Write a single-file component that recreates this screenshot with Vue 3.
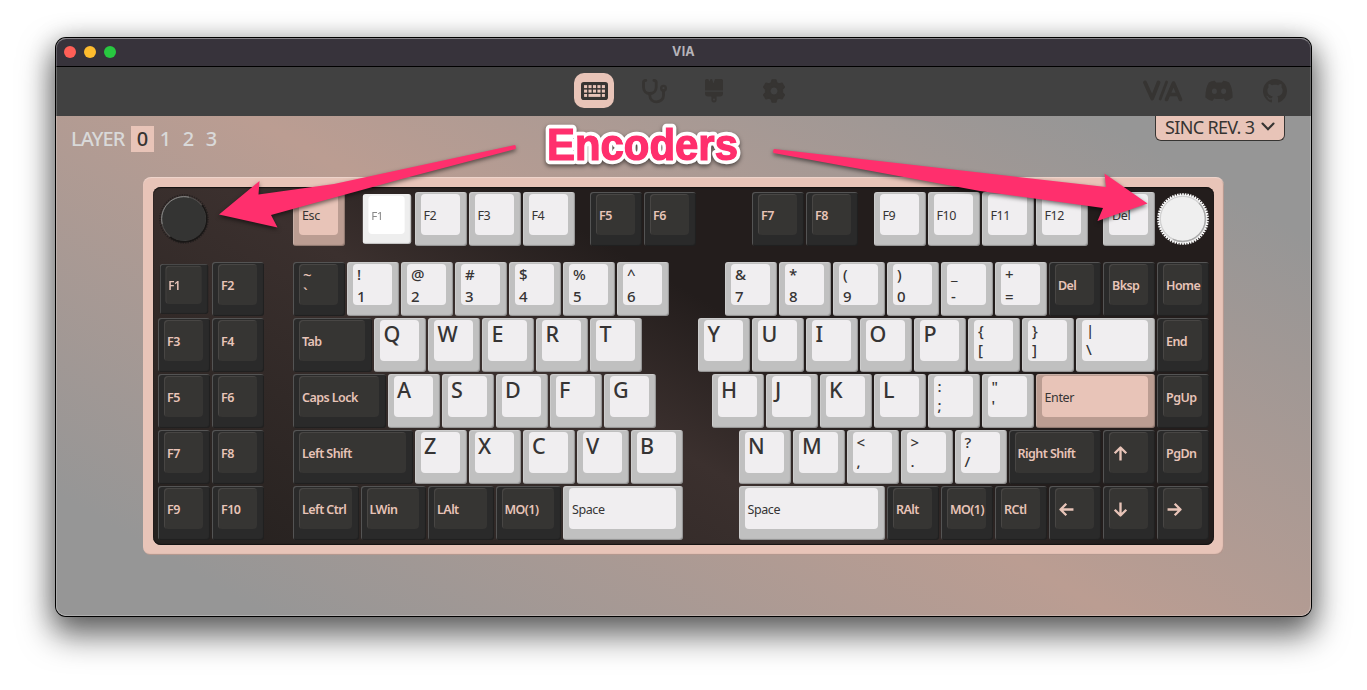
<script setup>
// Key fields: t legend, b lower legend, w width and g gap before in units, tone
const l = 'light', d = 'dark', a = 'accent'
const row = (s, first, tone = l) => [...s].map((c, i) => ({ t: c, g: i ? 0 : first, tone, big: true }))
const pairs = (s, first, tight = true) => s.map((p, i) => ({ t: p[0], b: p[1], g: i ? 0 : first, tone: l, tight }))
const k = (t, w = 1, g = 0, tone = d, o = {}) => ({ t, w, g, tone, ...o })

const rows = [
  [
    { knob: 'kd' }, k('Esc', 1, 1.5, a), k('F1', 1, 0.25, l, { pressed: true, white: true }), k('F2', 1, 0, l), k('F3', 1, 0, l), k('F4', 1, 0, l),
    k('F5', 1, 0.25), k('F6'), k('F7', 1, 1), k('F8'),
    k('F9', 1, 0.25, l), k('F10', 1, 0, l), k('F11', 1, 0, l), k('F12', 1, 0, l), k('Del', 1, 0.25, l), { knob: 'kl' },
  ],
  [
    k('F1', 1, 0, d, { pressed: true }), k('F2'), k('~', 1, 0.5, d, { b: '`', tight: true }),
    ...pairs(['!1', '@2', '#3', '$4', '%5', '^6'], 0, false),
    ...pairs(['&7', '*8', '(9', ')0', '_-', '+='], 1, false),
    k('Del'), k('Bksp'), k('Home'),
  ],
  [
    k('F3'), k('F4'), k('Tab', 1.5, 0.5), ...row('QWERT', 0), ...row('YUIOP', 1),
    ...pairs(['{[', '}]'], 0), k('|', 1.5, 0, l, { b: '\\', tight: true }), k('End'),
  ],
  [
    k('F5'), k('F6'), k('Caps Lock', 1.75, 0.5), ...row('ASDFG', 0), ...row('HJKL', 1),
    ...pairs([':;', '"\''], 0), k('Enter', 2.25, 0, a), k('PgUp'),
  ],
  [
    k('F7'), k('F8'), k('Left Shift', 2.25, 0.5), ...row('ZXCVB', 0), ...row('NM', 1),
    ...pairs(['<,', '>.', '?/'], 0), k('Right Shift', 1.75), k('', 1, 0, d, { arrow: -90 }), k('PgDn'),
  ],
  [
    k('F9'), k('F10'), k('Left Ctrl', 1.25, 0.5), k('LWin', 1.25), k('LAlt', 1.25), k('MO(1)', 1.25), k('Space', 2.25, 0, l),
    k('Space', 2.75, 1, l), k('RAlt'), k('MO(1)'), k('RCtl'), k('', 1, 0, d, { arrow: 180 }), k('', 1, 0, d, { arrow: 90 }), k('', 1, 0, d, { arrow: 0 }),
  ],
]
const size = (q) => ({ width: (q.w || 1) * 54 - 2 + 'px', marginLeft: (q.g || 0) * 54 + 'px' })
const teeth = Array.from({ length: 60 }, (_, i) => i * 6)
</script>

<template>
  <div class="desk">
    <div class="window">
      <header class="titlebar">
        <i class="dot red"></i><i class="dot amber"></i><i class="dot green"></i>
        <span class="title">VIA</span>
      </header>
      <nav class="toolbar">
        <div class="tabs">
          <span class="tab active">
            <svg width="27" height="18" viewBox="0 0 27 18">
              <rect x="0" y="0" width="27" height="18" rx="2.8" fill="#363432" />
              <g fill="#e8c4b8">
                <rect v-for="n in 5" :key="'p' + n" :x="n * 4.45 - 1.4" y="3.1" width="3.1" height="3" />
                <rect v-for="n in 5" :key="'q' + n" :x="n * 4.45 - 1.4" y="7.6" width="3.1" height="3" />
                <rect x="3.1" y="12" width="3" height="2.9" /><rect x="7.5" y="12" width="12" height="2.9" /><rect x="20.9" y="12" width="3" height="2.9" />
              </g>
            </svg>
          </span>
          <span class="tab">
            <svg width="26" height="26" viewBox="0 0 26 26" fill="none" stroke="#363432" stroke-width="2.8" stroke-linecap="round" stroke-linejoin="round">
              <path d="M4.8 2.4 C3 2.4 2.5 3 2.5 4.5 V9.2 C2.5 12.8 5 15.5 8.8 15.5 S15.2 12.8 15.2 9.2 V4.5 C15.2 3 14.7 2.4 12.9 2.4" />
              <path d="M8.8 15.5 V17.5 C9 21.5 12 23.8 15.5 23.8 S22.5 21.5 22.5 17.8 V13" />
              <circle cx="22.5" cy="10.2" r="2.3" stroke-width="2.4" />
            </svg>
          </span>
          <span class="tab">
            <svg width="20" height="24" viewBox="0 0 20 24" fill="#363432">
              <path d="M1 1.5 Q1 0 2.5 0 H4.2 L5.4 2.6 L6.6 0 H8 L9.5 4.4 L11 0 H17.5 Q19 0 19 1.5 V11.5 H1 Z" />
              <path fill-rule="evenodd" d="M1 12.8 H19 V14.2 Q19 17.5 15.8 17.5 H12.6 V20.8 A2.6 2.6 0 0 1 7.4 20.8 V17.5 H4.2 Q1 17.5 1 14.2 Z M10 19.4 A1 1 0 1 0 10 21.4 A1 1 0 1 0 10 19.4 Z" />
            </svg>
          </span>
          <span class="tab">
            <svg width="24" height="24" viewBox="0 0 24 24" fill="#363432">
              <path fill-rule="evenodd" d="M10 .8 H14 L14.8 3.7 L17 4.9 L20 4.2 L22.5 8 L20.5 10.4 V13.6 L22.5 16 L20 19.8 L17 19.1 L14.8 20.3 L14 23.2 H10 L9.2 20.3 L7 19.1 L4 19.8 L1.5 16 L3.5 13.6 V10.4 L1.5 8 L4 4.2 L7 4.9 L9.2 3.7 Z M12 7.9 A4.1 4.1 0 1 0 12 16.1 A4.1 4.1 0 1 0 12 7.9 Z" stroke="#363432" stroke-width="1.2" stroke-linejoin="round" />
            </svg>
          </span>
        </div>
        <div class="links">
          <svg width="40" height="22" viewBox="0 0 40 22" fill="none" stroke="#363432">
            <path d="M2 2.5 L9.2 18.5 L15.5 2.5" stroke-width="3.8" stroke-linejoin="round" stroke-linecap="round" />
            <path d="M17.2 19 L23.6 2" stroke-width="2.8" stroke-linecap="round" />
            <path d="M23.5 19.5 L30.5 3 L37.5 19.5 M27.5 14.5 H34.5" stroke-width="3.6" stroke-linejoin="round" stroke-linecap="round" />
          </svg>
          <svg class="discord" width="28" height="22" viewBox="0 0 28 22" fill="#363432">
            <path fill-rule="evenodd" d="M9.8 .8 Q6.5 1 3.8 2.5 Q.2 8.5 .4 17.6 Q4 20.8 7.4 21 L9.2 18.4 Q14 19.6 18.8 18.4 L20.6 21 Q24 20.8 27.6 17.6 Q27.8 8.5 24.2 2.5 Q21.5 1 18.2 .8 L17 2.6 H11 Z M9.4 8.6 A2.5 2.7 0 1 0 9.4 14 A2.5 2.7 0 1 0 9.4 8.6 Z M18.6 8.6 A2.5 2.7 0 1 0 18.6 14 A2.5 2.7 0 1 0 18.6 8.6 Z" />
          </svg>
          <svg width="24" height="24" viewBox="0 0 16 16" fill="#363432">
            <path d="M8 0C3.58 0 0 3.58 0 8c0 3.54 2.29 6.53 5.47 7.59.4.07.55-.17.55-.38 0-.19-.01-.82-.01-1.49-2.01.37-2.53-.49-2.69-.94-.09-.23-.48-.94-.82-1.13-.28-.15-.68-.52-.01-.53.63-.01 1.08.58 1.23.82.72 1.21 1.87.87 2.33.66.07-.52.28-.87.51-1.07-1.78-.2-3.64-.89-3.64-3.95 0-.87.31-1.59.82-2.15-.08-.2-.36-1.02.08-2.12 0 0 .67-.21 2.2.82.64-.18 1.32-.27 2-.27s1.36.09 2 .27c1.53-1.04 2.2-.82 2.2-.82.44 1.1.16 1.92.08 2.12.51.56.82 1.27.82 2.15 0 3.07-1.87 3.75-3.65 3.95.29.25.54.73.54 1.48 0 1.07-.01 1.93-.01 2.2 0 .21.15.46.55.38A8.01 8.01 0 0 0 16 8c0-4.42-3.58-8-8-8z" />
          </svg>
        </div>
      </nav>
      <main class="stage">
        <div class="head">
          <div class="layers">
            <span class="word">LAYER</span><b class="on">0</b><b>1</b><b>2</b><b>3</b>
          </div>
          <div class="device">
            <span>SINC REV. 3</span>
            <svg width="14" height="10" viewBox="0 0 14 10"><path d="M1.5 1.5 L7 7.3 L12.5 1.5" fill="none" stroke="#363432" stroke-width="2.1" stroke-linecap="round" /></svg>
          </div>
        </div>
        <div class="case">
          <div class="plate">
            <div v-for="(r, i) in rows" :key="i" class="row" :class="{ top: i === 0 }">
              <template v-for="(q, j) in r" :key="j">
                <svg v-if="q.knob" class="knob" width="52" height="54" viewBox="-26 -27 52 54">
                  <template v-if="q.knob === 'kd'">
                    <circle r="24" fill="none" stroke="#262120" stroke-width="1.6" stroke-dasharray="1.3 1.2" />
                    <circle r="22.4" fill="#343433" stroke="#555453" stroke-width="1" />
                    <path d="M18 -14 A22.8 22.8 0 0 1 -14 18" fill="none" stroke="#191716" stroke-width="1.6" />
                    <path d="M-21.8 5 A22.4 22.4 0 0 1 5 -21.8" fill="none" stroke="#868584" stroke-width="1" />
                  </template>
                  <template v-else>
                    <circle r="24.4" fill="#d8d8d8" />
                    <rect v-for="t in teeth" :key="t" x="-.8" y="-25.8" width="1.6" height="2.4" fill="#fff" :transform="`rotate(${t})`" />
                    <circle cx="-.2" cy="-.2" r="22.4" fill="#efefef" stroke="#d0d0d0" />
                    <path d="M16 -16 A22.7 22.7 0 0 1 -10 20.3" fill="none" stroke="#a9a9a9" stroke-width="1.3" />
                  </template>
                </svg>
                <div v-else class="key" :class="[q.tone, { pressed: q.pressed, white: q.white, big: q.big, dual: q.b, tight: q.tight }]" :style="size(q)">
                  <div class="cap">
                    <svg v-if="q.arrow !== undefined" class="arrow" width="15" height="15" viewBox="0 0 14 14">
                      <path :transform="`rotate(${q.arrow} 7 7)`" d="M.5 7 H12.4 M7.2 1.6 L12.6 7 L7.2 12.4" fill="none" stroke="#e8c4b8" stroke-width="2.2" stroke-linejoin="round" />
                    </svg>
                    <template v-else><span>{{ q.t }}</span><span v-if="q.b">{{ q.b }}</span></template>
                  </div>
                </div>
              </template>
            </div>
          </div>
        </div>
      </main>
    </div>
    <svg class="notes" width="1367" height="690" viewBox="0 0 1367 690">
      <g fill="#ff2f6d">
        <path d="M515 145 Q516.5 146.5 515.5 149 L403.5 178.6 L271 215 L277.5 227.5 L219 214.5 L259.5 181 L258.5 194.5 L334 184 Z" />
        <path d="M774 149 L1106 187 L1104.5 173.5 L1147.5 203.5 L1097.5 221 L1103 208 L980 191 L773.5 153 Q772.5 151 774 149 Z" />
      </g>
      <text class="halo" x="547" y="159.5" textLength="191" lengthAdjust="spacingAndGlyphs">Encoders</text>
      <text class="ink" x="547" y="159.5" textLength="191" lengthAdjust="spacingAndGlyphs" aria-hidden="true">Encoders</text>
    </svg>
  </div>
</template>

<style>
body { background: #fff; overflow: hidden; }
</style>
<style scoped>
.desk { position: relative; box-sizing: border-box; width: 1367px; height: 690px; padding: 38px 0 0 56px; font-family: "Noto Sans", "Open Sans", sans-serif; overflow: hidden; }
.window { width: 1255px; height: 578px; border-radius: 10px; overflow: hidden; box-shadow: 0 0 0 1px #000, 0 16px 32px 4px rgba(0, 0, 0, .55), 0 3px 26px rgba(0, 0, 0, .25); display: flex; flex-direction: column; position: relative; }
.window::after { content: ""; position: absolute; inset: 0; border-radius: 10px; border: 1px solid rgba(255, 255, 255, .22); border-top-color: rgba(255, 255, 255, .4); }
.titlebar { height: 28px; flex: none; background: #37333b; border-bottom: 1px solid #000; display: flex; align-items: center; gap: 8px; padding-left: 8px; position: relative; }
.dot { width: 12px; height: 12px; border-radius: 50%; }
.red { background: #ff5f57; } .amber { background: #febc2e; } .green { background: #28c840; }
.title { position: absolute; left: 0; right: 0; top: 6px; text-align: center; font: 700 12.5px Inter, sans-serif; letter-spacing: .2px; color: #b6b3b9; }
.toolbar { box-sizing: border-box; height: 49px; flex: none; background: #414141; position: relative; display: flex; justify-content: center; align-items: flex-start; padding: 6px 0 0 1px; }
.tabs { display: flex; gap: 20px; }
.tab { width: 40px; height: 35px; border-radius: 10px; display: flex; align-items: center; justify-content: center; }
.tab + .tab { box-sizing: border-box; padding-right: 1px; }
.tab.active { background: #e8c4b8; }
.links { position: absolute; right: 24px; top: 12px; display: flex; align-items: center; }
.discord { margin: 0 30px 0 22px; }
.stage { flex: 1; background: linear-gradient(30deg, #969696 10%, #bb9d92 50%, #969696 90%); display: flex; flex-direction: column; }
.head { display: flex; justify-content: space-between; height: 61px; }
.layers { display: flex; align-items: center; height: 26px; margin: 10px 0 0 15px; font-size: 20px; color: #d9d9d9; }
.word { width: 59px; letter-spacing: -.9px; font-weight: 500; line-height: 26px; }
.layers b { width: 23px; height: 26px; line-height: 26px; text-align: center; font-weight: 500; }
.layers .on { background: #e8c4b8; color: #363432; margin-left: 1px; }
.device { box-sizing: border-box; width: 130px; height: 25px; margin-right: 26px; background: #e8c4b8; border: 1px solid #363432; border-top: 0; border-radius: 0 0 6px 6px; display: flex; align-items: center; gap: 5px; padding: 0 0 2px 9px; font-size: 18px; letter-spacing: -.65px; color: #363432; white-space: nowrap; }
.device span { width: 91px; }
.case { box-sizing: border-box; width: 1081px; height: 378px; margin-left: 87px; padding: 10px; border-radius: 8px; background: #e8c4b8; box-shadow: inset 0 1px 1px rgba(255, 255, 255, .3), inset -1px -1px 1px rgba(0, 0, 0, .25); }
.plate { box-sizing: border-box; width: 1061px; height: 358px; padding: 5px; border-radius: 8px; background: linear-gradient(30deg, #272220 5%, #3b302e 41%, #231d1c 58%); box-shadow: inset 0 1px 1px #151211, inset 0 -1px 1px #151211; }
.row { display: flex; gap: 2px; height: 54px; margin-bottom: 2px; }
.row.top { margin-bottom: 16px; }
.knob { flex: none; }
.key { box-sizing: border-box; flex: none; height: 54px; padding: 2px 7px 11px 6px; border-radius: 3px; box-shadow: inset 1px 1px 0 rgba(255, 255, 255, .2), inset -1px -1px 1px rgba(0, 0, 0, .25); }
.cap { box-sizing: border-box; height: 41px; border-radius: 4px; padding: 2px 0 0 3px; display: flex; flex-direction: column; justify-content: center; font-size: 12.5px; line-height: 18px; letter-spacing: -.4px; white-space: nowrap; }
.light { background: #c0c0c0; } .light .cap { background: #f0eef0; color: #363434; }
.dark { background: #2a2a2a; } .dark .cap { background: #363533; color: #e8c4b8; font-weight: 600; letter-spacing: -.55px; box-shadow: inset 1px 1px 0 #484644; }
.accent { background: #bb9d92; } .accent .cap { background: #e8c4b8; color: #363434; }
.big .cap { justify-content: flex-start; padding: 0 0 0 3.5px; font-size: 21.5px; line-height: 28px; font-weight: 500; }
.key.dual .cap { justify-content: flex-start; font-size: 15px; line-height: 22px; padding: 0 0 0 4px; font-weight: 500; }
.dual span { flex: none; margin-top: -1.5px; height: 23.5px; }
.dual.tight span { height: 20px; }
.dual.tight span + span { margin-top: -1px; }
.pressed { transform: scale(.93); }
.white { background: #eee; } .white .cap { background: #fff; color: #888; }
.arrow { margin-left: 1px; }
.notes { position: absolute; left: 0; top: 0; filter: drop-shadow(0 2px 2px rgba(0, 0, 0, .55)); }
.notes text { font: 700 43.5px "Liberation Sans", Arial, sans-serif; fill: #ff2f6d; }
.notes .halo { stroke: #fff; stroke-width: 8.5px; stroke-linejoin: round; paint-order: stroke; }
.notes .ink { stroke: #ff2f6d; stroke-width: 1.2px; }
</style>
